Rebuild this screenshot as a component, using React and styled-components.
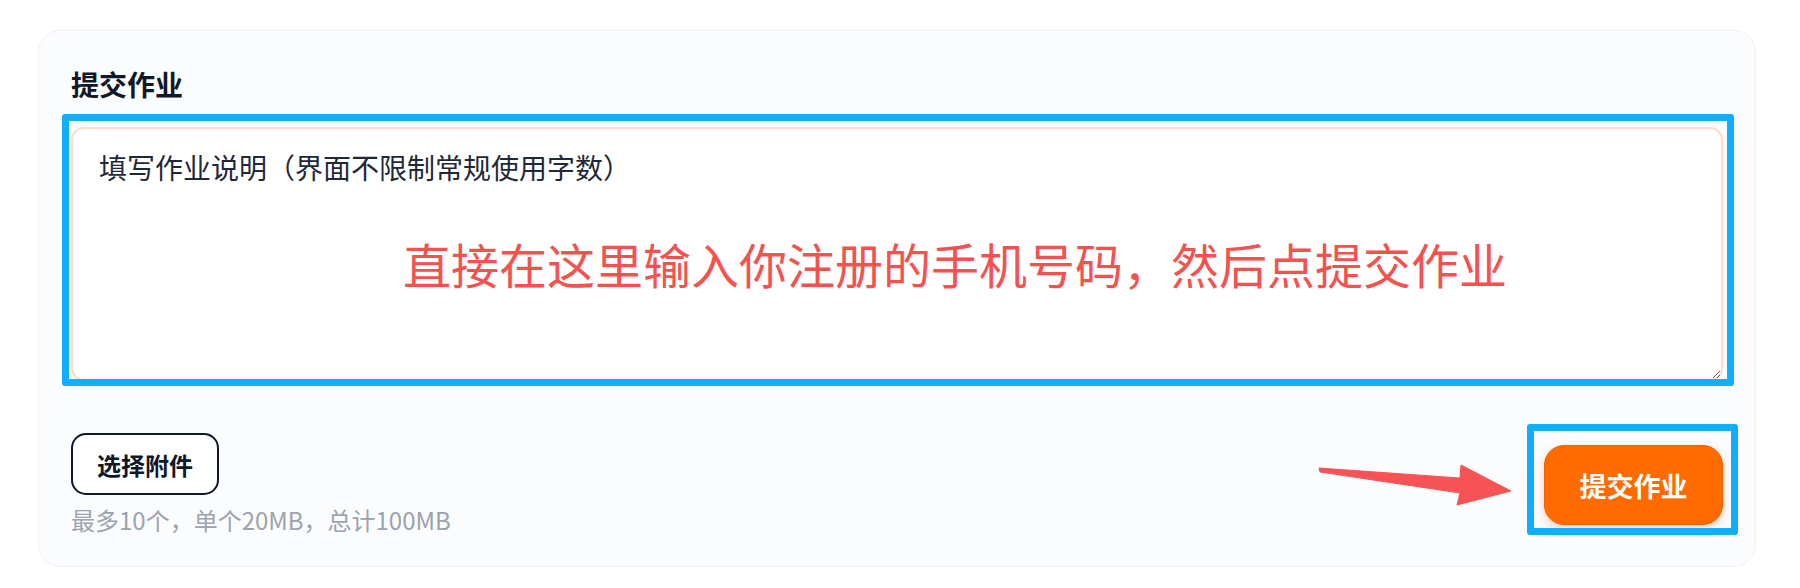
import React from "react";
import styled, { createGlobalStyle } from "styled-components";

const GlobalStyle = createGlobalStyle`
  html, body {
    margin: 0;
    padding: 0;
    background: #ffffff;
  }
  body {
    font-family: "Noto Sans CJK SC", "Noto Sans", sans-serif;
  }
`;

const Page = styled.div`
  padding: 30px 44px 21px 38px;
`;

const Card = styled.section`
  background: #fbfcfe;
  border: 1px solid #eef1f6;
  border-radius: 22px;
  padding: 34px 32px 29px;
`;

const Title = styled.h2`
  margin: 0 0 24px;
  font-size: 28px;
  line-height: 38px;
  font-weight: 700;
  color: #111827;
`;

const Field = styled.div`
  position: relative;
`;

const TextArea = styled.textarea`
  display: block;
  box-sizing: border-box;
  width: 100%;
  height: 254px;
  padding: 17px 26px;
  border: 2px solid #fedcc5;
  border-radius: 13px;
  background: #ffffff;
  font-family: inherit;
  font-size: 28px;
  line-height: 1.5;
  color: #1f2937;
  resize: vertical;
  outline: none;

  &::placeholder {
    color: #1f2937;
    opacity: 1;
  }
`;

/* blue annotation frame drawn over the screenshot */
const Highlight = styled.div`
  position: absolute;
  top: ${({ $t }) => $t}px;
  right: ${({ $r }) => $r}px;
  bottom: ${({ $b }) => $b}px;
  left: ${({ $l }) => $l}px;
  border: 7px solid #10aeff;
  border-radius: 3px;
  pointer-events: none;
`;

const Note = styled.span`
  position: absolute;
  top: 112px;
  left: 332px;
  font-size: 48px;
  line-height: 1;
  color: #f5524f;
  white-space: nowrap;
  pointer-events: none;
`;

const Footer = styled.div`
  display: flex;
  align-items: center;
  justify-content: space-between;
  margin-top: 52px;
`;

const Attach = styled.div`
  display: flex;
  flex-direction: column;
  align-items: flex-start;
  gap: 8px;
`;

const ChooseButton = styled.button`
  height: 62px;
  padding: 0 24px;
  border: 2px solid #0f172a;
  border-radius: 15px;
  background: #ffffff;
  font-family: inherit;
  font-size: 24px;
  font-weight: 700;
  color: #0f172a;
  cursor: pointer;
`;

const Hint = styled.div`
  font-size: 24px;
  line-height: 34px;
  color: #9ca3af;
`;

const SubmitWrap = styled.div`
  position: relative;
`;

const SubmitButton = styled.button`
  display: block;
  width: 179px;
  height: 80px;
  border: 1px solid #f26200;
  border-radius: 20px;
  background: #ff6b00;
  box-shadow: 0 4px 10px rgba(255, 107, 0, 0.28);
  font-family: inherit;
  font-size: 27px;
  font-weight: 700;
  color: #ffffff;
  cursor: pointer;
`;

const Arrow = styled.svg`
  position: absolute;
  top: 17px;
  left: -227px;
  width: 196px;
  height: 46px;
  overflow: visible;
  pointer-events: none;
`;

export default function App() {
  return (
    <>
      <GlobalStyle />
      <Page>
        <Card>
          <Title>提交作业</Title>
          <Field>
            <TextArea placeholder="填写作业说明（界面不限制常规使用字数）" />
            <Highlight $t={-13} $r={-11} $b={-5} $l={-9} />
            <Note>直接在这里输入你注册的手机号码，然后点提交作业</Note>
          </Field>
          <Footer>
            <Attach>
              <ChooseButton type="button">选择附件</ChooseButton>
              <Hint>最多10个，单个20MB，总计100MB</Hint>
            </Attach>
            <SubmitWrap>
              <Arrow viewBox="0 0 196 46">
                <polygon
                  points="2,6 143,16 144,3 194,29 140,43 143,31 3,10"
                  fill="#f65356"
                  stroke="#f65356"
                  strokeWidth="1"
                  strokeLinejoin="round"
                />
              </Arrow>
              <SubmitButton type="button">提交作业</SubmitButton>
              <Highlight $t={-21} $r={-15} $b={-10} $l={-17} />
            </SubmitWrap>
          </Footer>
        </Card>
      </Page>
    </>
  );
}
